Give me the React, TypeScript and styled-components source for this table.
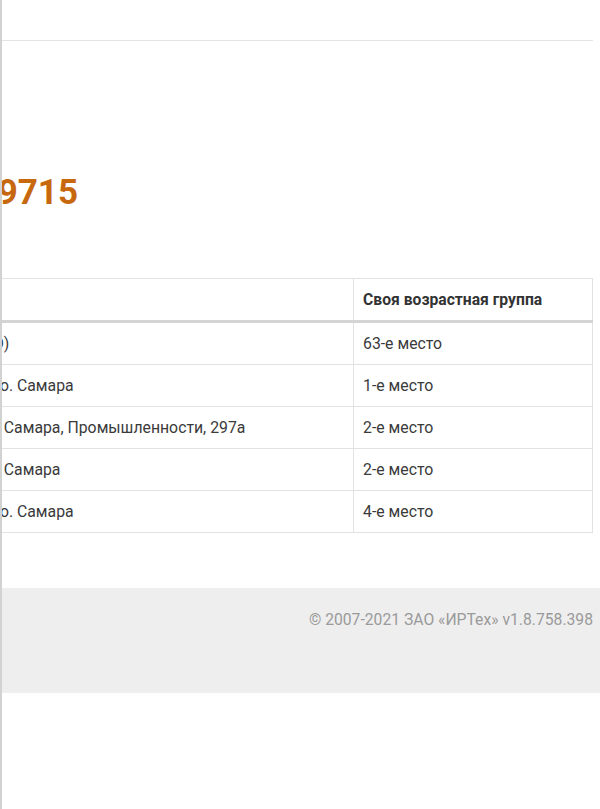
import styled, { createGlobalStyle } from "styled-components";

const GlobalStyle = createGlobalStyle`
  html, body {
    margin: 0;
    padding: 0;
    background: #fff;
  }
  body {
    font-family: Roboto, "Liberation Sans", Arial, sans-serif;
    color: #333;
    overflow: hidden;
  }
`;

const results = [
  { place: "Всероссийские соревнования (ГТО)", rank: "63-е место" },
  { place: "Первенство Самарской области, г.о. Самара", rank: "1-е место" },
  { place: "Первенство Самарской области, г. Самара, Промышленности, 297а", rank: "2-е место" },
  { place: "Первенство Самарской области, г. Самара", rank: "2-е место" },
  { place: "Первенство Самарской области, г.о. Самара", rank: "4-е место" },
];

export default function App() {
  return (
    <Shell>
      <GlobalStyle />
      <Viewport>
        <Page>
          <TopBar />
          <Main>
            <Title>Участник №1239715</Title>
            <Table>
              <colgroup>
                <col />
                <col style={{ width: 239 }} />
              </colgroup>
              <thead>
                <tr>
                  <Th>Соревнование</Th>
                  <Th>Своя возрастная группа</Th>
                </tr>
              </thead>
              <tbody>
                {results.map((r, i) => (
                  <tr key={i}>
                    <Td>{r.place}</Td>
                    <Td>{r.rank}</Td>
                  </tr>
                ))}
              </tbody>
            </Table>
          </Main>
        </Page>
      </Viewport>
      <Footer>
        <Copy>© 2007-2021 ЗАО «ИРТех» v1.8.758.398</Copy>
      </Footer>
    </Shell>
  );
}

const Shell = styled.div`
  min-height: 100vh;
  border-left: 2px solid #d2d2d2;
  box-sizing: border-box;
`;

const Viewport = styled.div`
  display: flex;
  justify-content: flex-end;
  overflow: hidden;
`;

const Page = styled.div`
  flex: 0 0 868px;
  width: 868px;
  padding-right: 7px;
  box-sizing: border-box;
`;

const TopBar = styled.div`
  height: 40px;
  border-bottom: 1px solid #e4e4e4;
`;

const Main = styled.div`
  padding: 131px 0 55px;
`;

const Title = styled.h1`
  margin: 0 0 64px;
  padding-left: 6px;
  font-size: 35px;
  line-height: 42px;
  font-weight: 700;
  color: #c8680e;
  white-space: nowrap;
`;

const Table = styled.table`
  width: 100%;
  border-collapse: collapse;
  table-layout: fixed;
  font-size: 15.8px;
  border: 1px solid #e2e2e2;
`;

const Th = styled.th`
  height: 41px;
  padding: 0 9px;
  text-align: left;
  font-weight: 700;
  font-size: 15.7px;
  color: #333;
  border-right: 1px solid #e2e2e2;
  border-bottom: 3px solid #d4d4d4;
  white-space: nowrap;
`;

const Td = styled.td`
  height: 41px;
  padding: 0 9px;
  color: #3a3a3a;
  border-right: 1px solid #e2e2e2;
  border-top: 1px solid #e2e2e2;
  white-space: nowrap;
  overflow: hidden;
`;

const Footer = styled.footer`
  background: #eeeeee;
  height: 105px;
  padding: 22px 7px 0 0;
  box-sizing: border-box;
  text-align: right;
`;

const Copy = styled.div`
  font-size: 15.7px;
  line-height: 20px;
  color: #9a9a9a;
`;
